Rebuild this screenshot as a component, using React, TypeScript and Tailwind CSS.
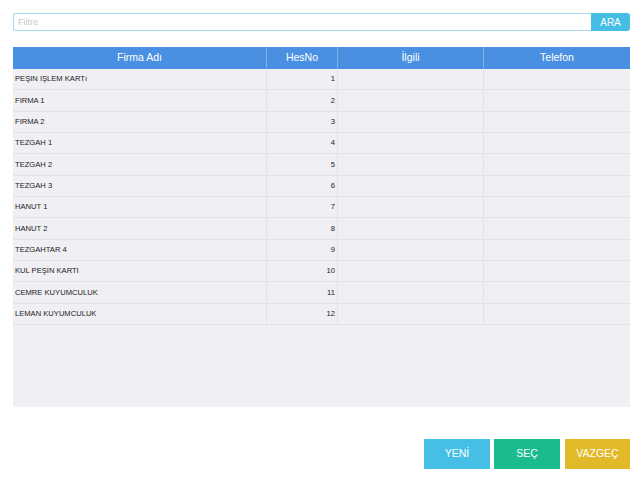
import type { FC } from "react";

type Firma = { name: string; no: number };

const firmalar: Firma[] = [
  { name: "PEŞIN IŞLEM KARTı", no: 1 },
  { name: "FIRMA 1", no: 2 },
  { name: "FIRMA 2", no: 3 },
  { name: "TEZGAH 1", no: 4 },
  { name: "TEZGAH 2", no: 5 },
  { name: "TEZGAH 3", no: 6 },
  { name: "HANUT 1", no: 7 },
  { name: "HANUT 2", no: 8 },
  { name: "TEZGAHTAR 4", no: 9 },
  { name: "KUL PEŞİN KARTI", no: 10 },
  { name: "CEMRE KUYUMCULUK", no: 11 },
  { name: "LEMAN KUYUMCULUK", no: 12 },
];

const cols = "grid grid-cols-[254px_71px_146px_1fr]";

const Row: FC<{ firma: Firma }> = ({ firma }) => (
  <div className={`${cols} h-[21.33px] border-b border-[#e2e2e7] text-[7.6px] text-[#222]`}>
    <div className="flex items-center pl-[2px] border-r border-[#e2e2e7]">{firma.name}</div>
    <div className="flex items-center justify-end pr-[2px] border-r border-[#e2e2e7]">{firma.no}</div>
    <div className="border-r border-[#e2e2e7]" />
    <div />
  </div>
);

export default function App() {
  return (
    <div
      className="w-[643px] h-[482px] bg-white flex flex-col px-[13px] pt-[13px]"
      style={{ fontFamily: '"Liberation Sans", Arial, sans-serif' }}
    >
      <div className="flex h-[18px]">
        <input
          type="text"
          placeholder="Filtre"
          className="flex-1 min-w-0 h-full border border-[#a6dced] rounded-l-[3px] border-r-0 px-[4px] text-[9px] placeholder:text-[#c8c8c8] outline-none"
        />
        <button className="w-[39px] h-full bg-[#46bde5] text-white text-[10px] rounded-r-[3px]">
          ARA
        </button>
      </div>

      <div className="mt-[16px] h-[360px] bg-[#efeff4] flex flex-col">
        <div className={`${cols} h-[22px] bg-[#4a90e2] text-white text-[10.5px]`}>
          <div className="flex items-center justify-center border-r border-[#7fb0ea]">Firma Adı</div>
          <div className="flex items-center justify-center border-r border-[#7fb0ea]">HesNo</div>
          <div className="flex items-center justify-center border-r border-[#7fb0ea]">İlgili</div>
          <div className="flex items-center justify-center">Telefon</div>
        </div>
        {firmalar.map((f) => (
          <Row key={f.no} firma={f} />
        ))}
      </div>

      <div className="mt-[32px] flex justify-end gap-[4px]">
        <button className="w-[66px] h-[30px] bg-[#46bfe6] text-white text-[10.5px]">YENİ</button>
        <button className="w-[66px] h-[30px] bg-[#1abc8f] text-white text-[10.5px]">SEÇ</button>
        <button className="w-[65px] h-[30px] bg-[#e2b928] text-white text-[10.5px] ml-[1px]">VAZGEÇ</button>
      </div>
    </div>
  );
}
